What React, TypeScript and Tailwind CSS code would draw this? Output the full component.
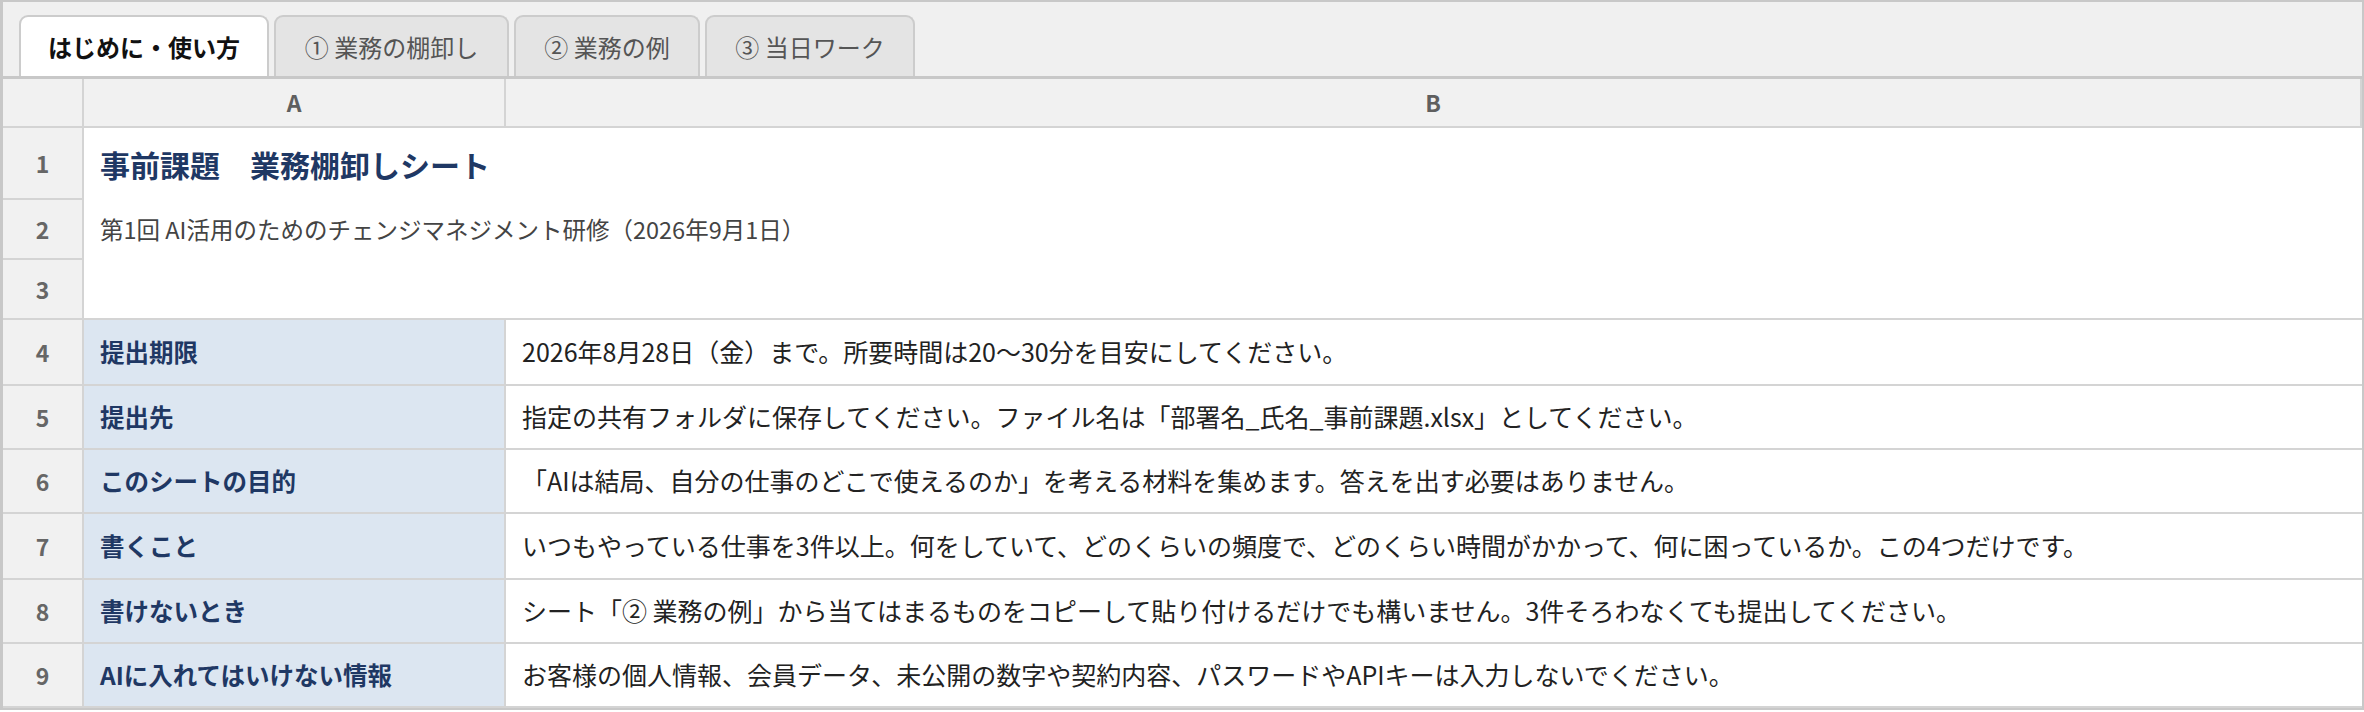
import React from "react";

const rows = [
  { n: 4, h: "h-[66px]", label: "提出期限", text: "2026年8月28日（金）まで。所要時間は20〜30分を目安にしてください。" },
  { n: 5, h: "h-[64px]", label: "提出先", text: "指定の共有フォルダに保存してください。ファイル名は「部署名_氏名_事前課題.xlsx」としてください。" },
  { n: 6, h: "h-[64px]", label: "このシートの目的", text: "「AIは結局、自分の仕事のどこで使えるのか」を考える材料を集めます。答えを出す必要はありません。" },
  { n: 7, h: "h-[66px]", label: "書くこと", text: "いつもやっている仕事を3件以上。何をしていて、どのくらいの頻度で、どのくらい時間がかかって、何に困っているか。この4つだけです。" },
  { n: 8, h: "h-[64px]", label: "書けないとき", text: "シート「② 業務の例」から当てはまるものをコピーして貼り付けるだけでも構いません。3件そろわなくても提出してください。" },
  { n: 9, h: "h-[64px]", label: "AIに入れてはいけない情報", text: "お客様の個人情報、会員データ、未公開の数字や契約内容、パスワードやAPIキーは入力しないでください。" },
];

const tabs = [
  { t: "はじめに・使い方", w: "w-[250px]", active: true },
  { t: "① 業務の棚卸し", w: "w-[235px]", active: false },
  { t: "② 業務の例", w: "w-[186px]", active: false },
  { t: "③ 当日ワーク", w: "w-[210px]", active: false },
];

function RowNum({ n, h }: { n: number | string; h: string }) {
  return (
    <div
      className={`${h} w-[81px] shrink-0 bg-[#f1f1f1] border-r-2 border-b-2 border-[#d4d4d4] flex items-center justify-center text-[23px] font-semibold text-[#666666]`}
    >
      {n}
    </div>
  );
}

export default function App() {
  return (
    <div className="w-[2364px] h-[712px] bg-white font-['Noto_Sans_CJK_JP','Noto_Sans',sans-serif]">
      <div className="border-t-2 border-l-[3px] border-r-2 border-b-2 border-[#c8c8c8] bg-[#f0f0f0]">
        {/* Tab bar */}
        <div className="h-[77px] border-b-[3px] border-[#c8c8c8] pt-[13px] pl-[16px] flex items-end gap-[5px]">
          {tabs.map((tab) => (
            <div
              key={tab.t}
              className={`${tab.w} h-[61px] rounded-t-[9px] border-2 border-b-0 border-[#cccccc] flex items-center justify-center text-[24px] ${
                tab.active ? "bg-white font-bold text-[#111111]" : "bg-[#e4e4e4] text-[#555555]"
              }`}
            >
              {tab.t}
            </div>
          ))}
        </div>

        {/* Column header */}
        <div className="flex h-[49px] bg-[#f1f1f1] border-b-2 border-[#d4d4d4]">
          <div className="w-[81px] shrink-0 border-r-2 border-[#d4d4d4]" />
          <div className="w-[422px] shrink-0 border-r-2 border-[#d4d4d4] flex items-center justify-center text-[23px] font-semibold text-[#5f5f5f]">
            A
          </div>
          <div className="flex-1 border-r-2 border-[#d4d4d4] flex items-center justify-center text-[23px] font-semibold text-[#5f5f5f]">
            B
          </div>
        </div>

        {/* Rows 1-3 merged title area */}
        <div className="flex">
          <div className="flex flex-col">
            <RowNum n={1} h="h-[72px]" />
            <RowNum n={2} h="h-[60px]" />
            <RowNum n={3} h="h-[60px]" />
          </div>
          <div className="flex-1 bg-white border-b-2 border-[#d4d4d4] flex flex-col">
            <div className="h-[72px] flex items-center pl-[16px] text-[30px] font-bold text-[#1f3864]">
              事前課題　業務棚卸しシート
            </div>
            <div className="h-[60px] flex items-center pl-[16px] text-[23.5px] text-[#444444]">
              第1回 AI活用のためのチェンジマネジメント研修（2026年9月1日）
            </div>
            <div className="h-[58px]" />
          </div>
        </div>

        {/* Rows 4-9 */}
        {rows.map((r) => (
          <div key={r.n} className="flex">
            <RowNum n={r.n} h={r.h} />
            <div
              className={`${r.h} w-[422px] shrink-0 bg-[#dce6f1] border-r-2 border-b-2 border-[#d4d4d4] flex items-center pl-[16px] text-[24.5px] font-bold text-[#1f3864]`}
            >
              {r.label}
            </div>
            <div
              className={`${r.h} flex-1 bg-white border-b-2 border-[#d4d4d4] flex items-center pl-[16px] text-[25px] text-[#222222] whitespace-nowrap`}
            >
              {r.text}
            </div>
          </div>
        ))}
      </div>
    </div>
  );
}
